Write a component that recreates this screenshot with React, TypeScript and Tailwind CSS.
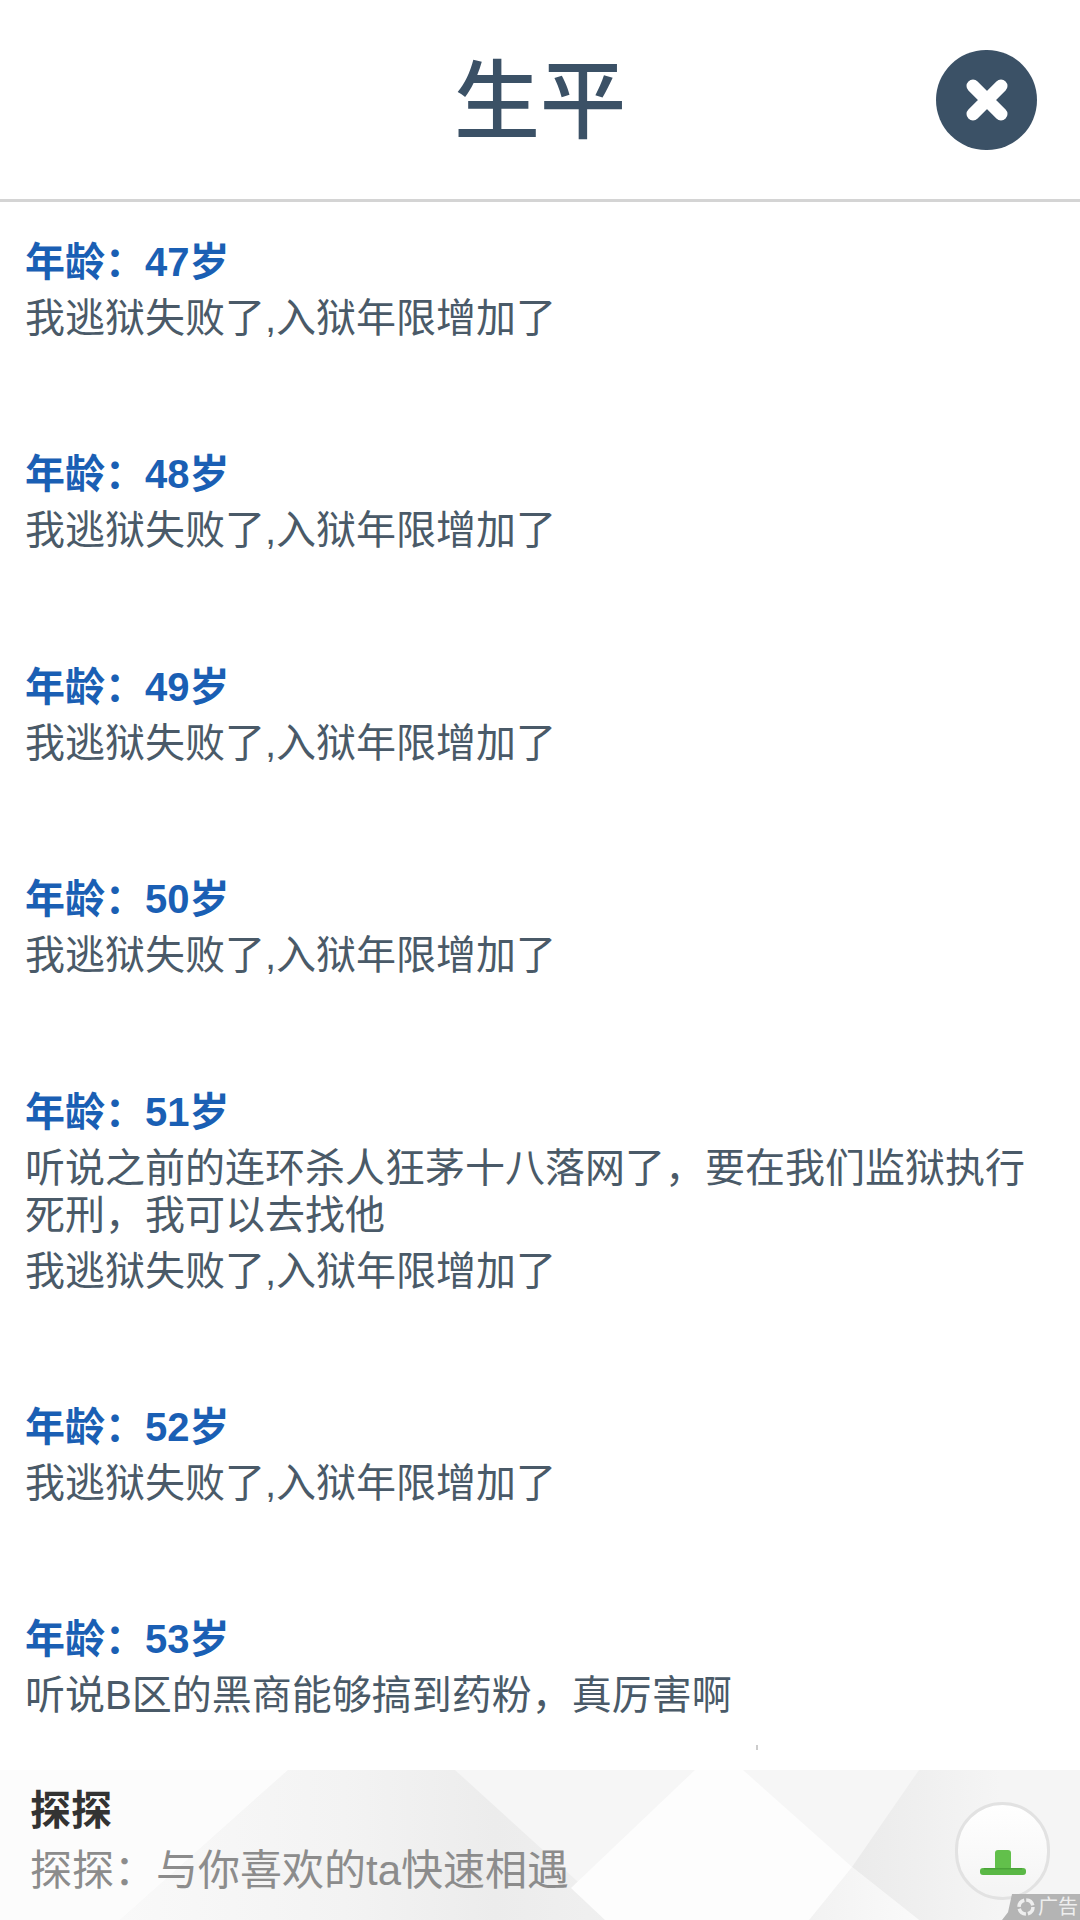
const FONT = "font-['Liberation_Sans','Noto_Sans_CJK_SC',sans-serif]";
const ESCAPE = "我逃狱失败了,入狱年限增加了";
const items: { age: number; lines: string[] }[] = [
  { age: 47, lines: [ESCAPE] },
  { age: 48, lines: [ESCAPE] },
  { age: 49, lines: [ESCAPE] },
  { age: 50, lines: [ESCAPE] },
  { age: 51, lines: ["听说之前的连环杀人狂茅十八落网了，要在我们监狱执行死刑，我可以去找他", ESCAPE] },
  { age: 52, lines: [ESCAPE] },
  { age: 53, lines: ["听说B区的黑商能够搞到药粉，真厉害啊"] },
];

export default function App() {
  return (
    <div className={`${FONT} relative flex h-[1920px] w-[1080px] flex-col overflow-hidden bg-white`}>
      <header className="relative flex h-[202px] shrink-0 items-center justify-center border-b-[3px] border-[#d4d4d4] pt-[4px]">
        <h1 className="text-[86px] leading-none font-medium text-[#3b5166]">生平</h1>
        <div className="absolute top-[50px] left-[936px] flex h-[100px] w-[101px] items-center justify-center rounded-full bg-[#3b5166]">
          <svg width="44" height="44" viewBox="0 0 44 44">
            <path d="M8 8 L36 36 M36 8 L8 36" stroke="#fff" strokeWidth="13" strokeLinecap="round" />
          </svg>
        </div>
      </header>
      <main className="flex-1 pt-[37px] pr-[26px] pl-[25px]">
        {items.map((it) => (
          <section key={it.age} className="mb-[109.4px]">
            <div className="text-[40px] leading-[47px] font-bold text-[#1a5fb4]">年龄：{it.age}岁</div>
            {it.lines.map((l, i) => (
              <p key={i} className="mt-[9px] text-[40px] leading-[47px] text-[#4a5a68]">{l}</p>
            ))}
          </section>
        ))}
      </main>
      <span className="absolute top-[1745px] left-[756px] h-[5px] w-[2px] bg-[#cccccc]" />
      <footer className="absolute bottom-0 left-0 h-[150px] w-[1080px] overflow-hidden bg-[#f6f6f6]">
        <svg className="absolute inset-0" width="1080" height="150" viewBox="0 0 1080 150">
          <defs>
            <linearGradient id="mid" gradientUnits="userSpaceOnUse" x1="120" x2="620" y1="0" y2="0">
              <stop offset="0" stopColor="#f9f9f9" />
              <stop offset="0.45" stopColor="#f3f3f3" />
              <stop offset="0.75" stopColor="#ececec" />
              <stop offset="1" stopColor="#f0f0f0" />
            </linearGradient>
            <linearGradient id="right" gradientUnits="userSpaceOnUse" x1="830" x2="1000" y1="0" y2="0">
              <stop offset="0" stopColor="#e9e9e9" />
              <stop offset="1" stopColor="#f5f5f5" />
            </linearGradient>
            <linearGradient id="low" gradientUnits="userSpaceOnUse" x1="809" x2="919" y1="0" y2="0">
              <stop offset="0" stopColor="#f2f2f2" />
              <stop offset="1" stopColor="#fafafa" />
            </linearGradient>
          </defs>
          <polygon points="0,0 288,0 120,150 0,150" fill="#fcfcfc" />
          <polygon points="120,150 288,0 455,0 620,150" fill="url(#mid)" />
          <polygon points="919,0 1080,0 1080,150 919,150 852,97" fill="url(#right)" />
          <polygon points="852,97 919,150 809,150" fill="url(#low)" />
          <polygon points="695,0 743,0 852,97 809,150 605,150 571,118" fill="#fdfdfd" />
        </svg>
        <div className="relative pl-[30px]">
          <div className="pt-[13px] text-[41px] leading-[56px] font-bold text-[#333333]">探探</div>
          <div className="pt-[4px] text-[42px] leading-[56px] text-[#8c8c8c]">探探：与你喜欢的ta快速相遇</div>
        </div>
        <div className="absolute top-[32px] left-[955px] h-[98px] w-[95px] rounded-full border-[3px] border-[#e2e2e2] bg-gradient-to-b from-[#ffffff] to-[#f4f4f4]" />
        <svg width="46" height="26" viewBox="0 0 46 26" className="absolute top-[80px] left-[980px]">
          <rect x="15" y="0" width="16" height="20" rx="3" fill="#62c04b" />
          <rect x="0" y="18" width="46" height="7" rx="3" fill="#5ab846" />
          <rect x="4" y="18" width="38" height="1.5" fill="#4aa339" />
        </svg>
        <div className="absolute right-0 bottom-0 flex h-[26px] w-[78px] items-center gap-[2px] rounded-tl-[10px] bg-[#b4b4b4] pl-[14px] text-[20px] leading-none text-[#eeeeee] [clip-path:polygon(10px_0,100%_0,100%_100%,0_100%,6px_70%)]">
          <svg width="20" height="20" viewBox="0 0 20 20" className="shrink-0">
            <circle cx="10" cy="10" r="7" fill="none" stroke="#eeeeee" strokeWidth="3.5" strokeDasharray="9 2" />
          </svg>
          <span>广告</span>
        </div>
      </footer>
    </div>
  );
}
